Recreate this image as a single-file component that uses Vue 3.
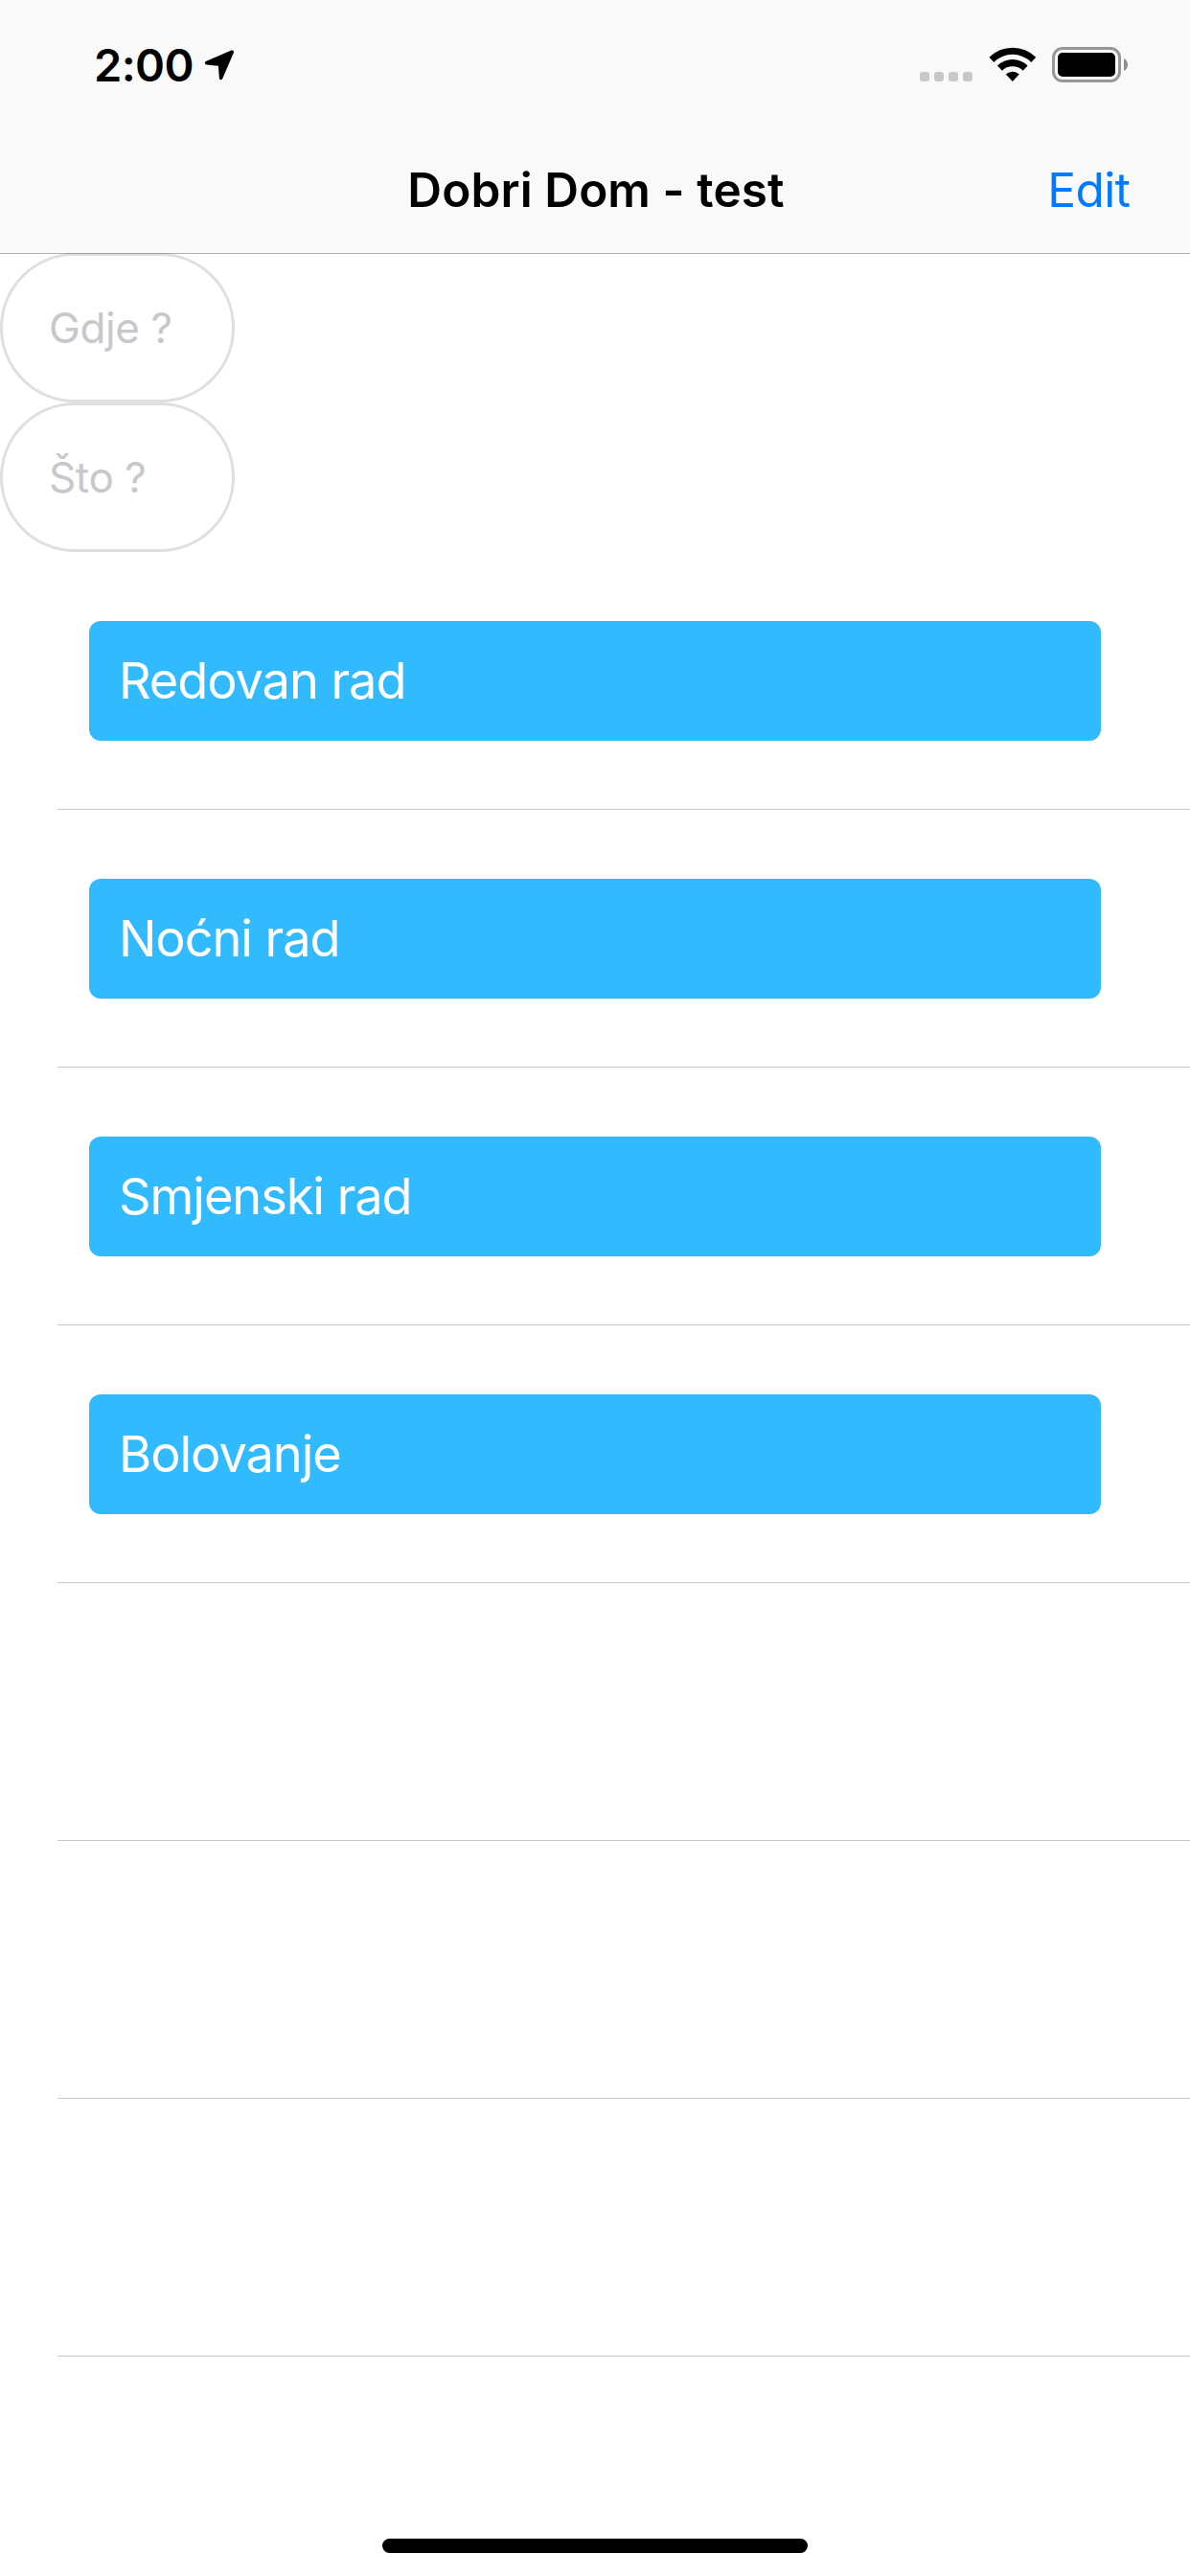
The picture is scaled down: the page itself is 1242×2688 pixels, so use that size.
<script setup>
const fields = ['Gdje ?', 'Što ?']
const rows = ['Redovan rad', 'Noćni rad', 'Smjenski rad', 'Bolovanje']
const emptyRows = 3
</script>

<template>
  <div class="screen">
    <header class="header">
      <div class="status">
        <div class="clock">
          <span class="time">2:00</span>
          <svg class="arrow" width="32" height="32" viewBox="0 0 32 32">
            <path d="M29.2 2.2 L2.6 13.6 L16.6 15.2 L17.6 29.4 Z" fill="#000" stroke="#000" stroke-width="3.6" stroke-linejoin="round" />
          </svg>
        </div>
        <div class="indicators">
          <div class="dots"><i v-for="n in 4" :key="n"></i></div>
          <svg class="wifi" width="50" height="36" viewBox="0 0 50 36">
            <path d="M0.4 10.7 A34.6 34.6 0 0 1 49.2 10.7 L44.3 15.9 A27.6 27.6 0 0 0 5.3 15.9 Z" />
            <path d="M9 19.6 A22.4 22.4 0 0 1 40.6 19.6 L35.7 24.8 A15.6 15.6 0 0 0 13.9 24.8 Z" />
            <path d="M17.8 28.4 A10.4 10.4 0 0 1 31.8 28.4 L24.8 36 Z" />
          </svg>
          <svg class="battery" width="80" height="37" viewBox="0 0 80 37">
            <rect x="1.5" y="1.5" width="69" height="34" rx="9.5" fill="none" stroke="#979797" stroke-width="3" />
            <rect x="6" y="6" width="60" height="25" rx="5" fill="#000" />
            <path d="M75 12 C80.300 14.500 80.300 22.500 75 25 Z" fill="#8c8c8c" />
          </svg>
        </div>
      </div>
      <nav class="nav">
        <span></span>
        <h1 class="title">Dobri Dom - test</h1>
        <a class="edit">Edit</a>
      </nav>
    </header>

    <div class="fields">
      <div v-for="f in fields" :key="f" class="field"><span>{{ f }}</span></div>
    </div>

    <ul class="list">
      <li v-for="label in rows" :key="label" class="row">
        <div class="card"><span>{{ label }}</span></div>
      </li>
      <li v-for="n in emptyRows" :key="n" class="row"></li>
    </ul>

    <footer class="home"><div class="bar"></div></footer>
  </div>
</template>

<style>
body {
  margin: 0;
  background: #fff;
}
</style>

<style scoped>
.screen {
  width: 1242px;
  height: 2688px;
  display: flex;
  flex-direction: column;
  overflow: hidden;
  background: #fff;
  font-family: Inter, "Liberation Sans", sans-serif;
  white-space: nowrap;
}
.header {
  position: relative;
  z-index: 1;
  box-sizing: border-box;
  flex: none;
  height: 265px;
  margin-bottom: -1px;
  background: #f9f9f9;
  background-clip: padding-box;
  border-bottom: 1px solid rgba(0, 0, 0, 0.3);
}
.status {
  height: 132px;
  display: flex;
  justify-content: space-between;
  align-items: flex-start;
}
.clock {
  display: flex;
  padding: 38px 0 0 98px;
}
.time {
  width: 115px;
  font-size: 47px;
  line-height: 60px;
  font-weight: 600;
  letter-spacing: -0.6px;
}
.arrow {
  margin-top: 14px;
}
.indicators {
  display: flex;
  padding: 49px 64px 0 0;
}
.dots {
  display: flex;
  gap: 5px;
  margin: 26px 17px 0 0;
}
.dots i {
  width: 10px;
  height: 10px;
  border-radius: 3px;
  background: #c7c7c7;
}
.battery {
  margin-left: 16px;
}
.nav {
  height: 132px;
  display: grid;
  grid-template-columns: 1fr auto 1fr;
  align-items: center;
}
.title {
  margin: 0;
  padding-left: 2px;
  font-size: 49.5px;
  line-height: 60px;
  font-weight: 600;
  letter-spacing: 0.1px;
}
.edit {
  justify-self: end;
  margin-right: 62.5px;
  font-size: 49.5px;
  line-height: 60px;
  letter-spacing: -0.5px;
  color: #007aff;
}
.fields {
  flex: none;
}
.field {
  box-sizing: border-box;
  width: 245px;
  height: 156px;
  border: 3px solid #dfdfdf;
  border-radius: 78px;
  padding-left: 48px;
  display: flex;
  align-items: center;
  font-size: 44px;
  letter-spacing: -0.4px;
  color: #c7c7cc;
}
.list {
  flex: none;
  margin: 0;
  padding: 0;
  list-style: none;
}
.row {
  box-sizing: border-box;
  height: 269px;
  margin-left: 60px;
  padding: 72px 93px 0 33px;
  border-bottom: 1px solid #c8c7cc;
}
.card {
  box-sizing: border-box;
  height: 125px;
  padding: 0 0 2px 31px;
  display: flex;
  align-items: center;
  border-radius: 12px;
  background: #32baff;
  color: #fff;
  font-size: 52.3px;
  letter-spacing: -1.05px;
}
.home {
  flex: 1;
  display: flex;
  justify-content: center;
  align-items: flex-end;
  padding-bottom: 24px;
}
.bar {
  width: 444px;
  height: 15px;
  border-radius: 8px;
  background: #000;
}
</style>
